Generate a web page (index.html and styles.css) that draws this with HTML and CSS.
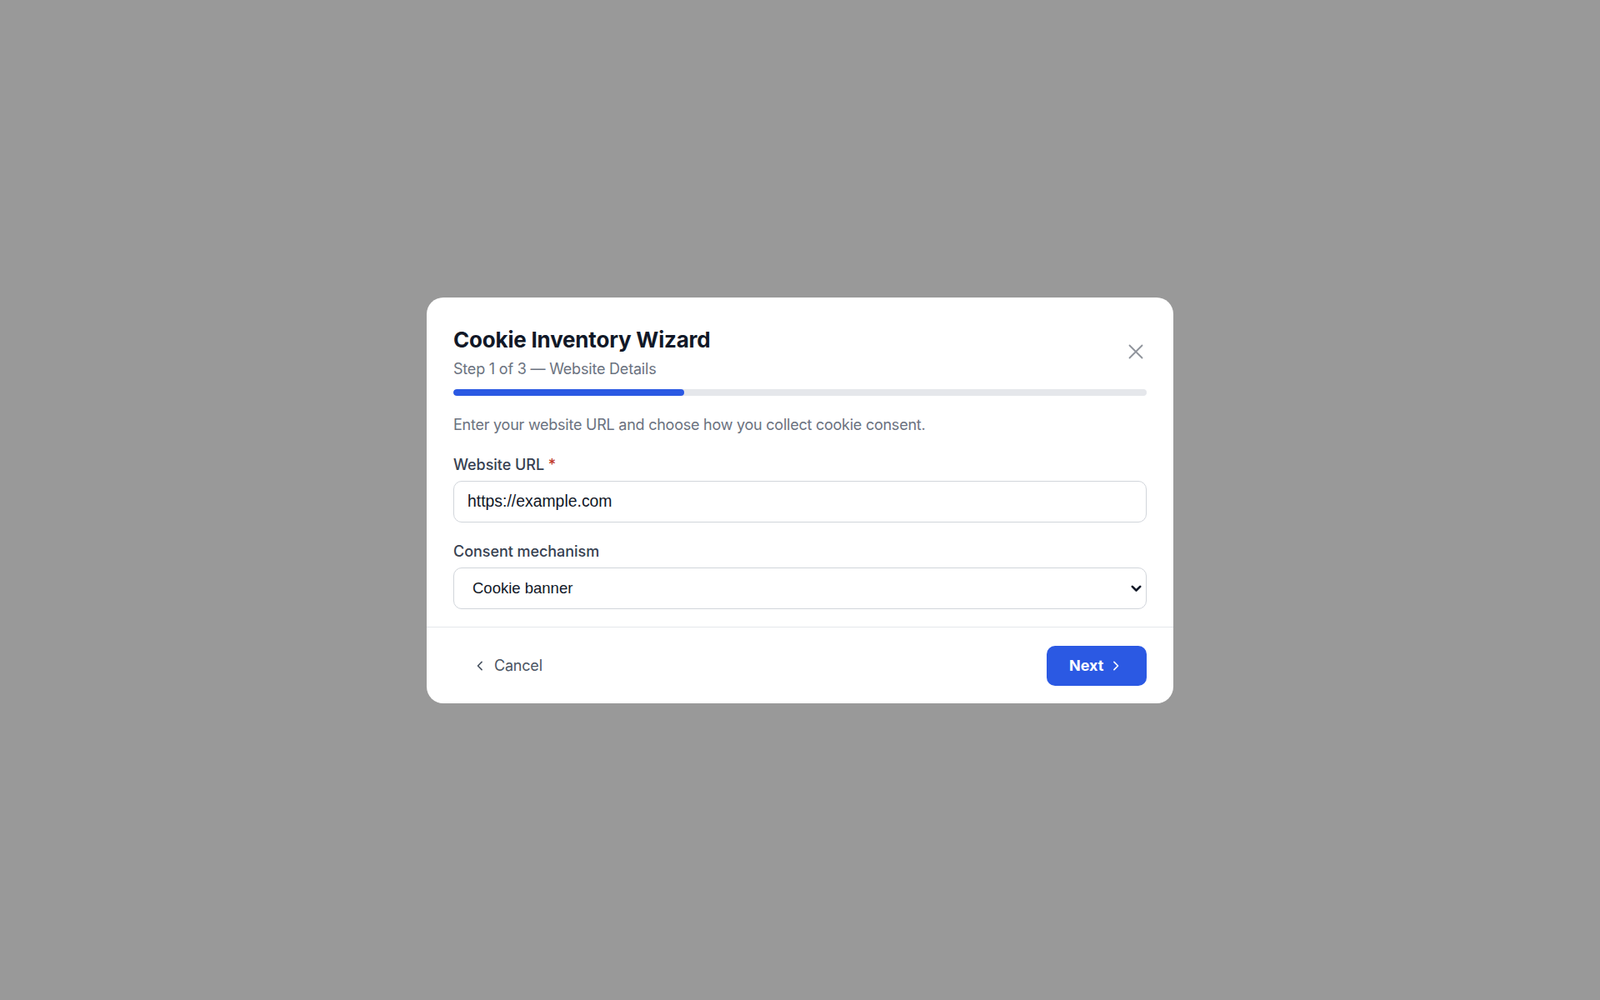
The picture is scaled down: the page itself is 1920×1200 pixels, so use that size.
FILE: index.html
```html
<!DOCTYPE html>
<html lang="en">
<head>
<meta charset="utf-8">
<title>Cookie Inventory Wizard</title>
<link rel="stylesheet" href="styles.css">
</head>
<body>
<div class="overlay">
  <div class="modal" role="dialog" aria-labelledby="wizard-title">
    <div class="modal-body">
      <div class="header">
        <div class="header-text">
          <h2 id="wizard-title" class="title">Cookie Inventory Wizard</h2>
          <p class="subtitle">Step 1 of 3 — Website Details</p>
        </div>
        <button class="close" aria-label="Close">
          <svg width="20" height="20" viewBox="0 0 20 20" fill="none" stroke="currentColor" stroke-width="1.8" stroke-linecap="round"><path d="M2.5 2.5l15 15M17.5 2.5l-15 15"/></svg>
        </button>
      </div>
      <div class="progress"><div class="progress-fill" style="width:33.33%"></div></div>
      <p class="desc">Enter your website URL and choose how you collect cookie consent.</p>
      <div class="field">
        <label class="label" for="url">Website URL <span class="req">*</span></label>
        <input id="url" class="input" type="text" value="https://example.com">
      </div>
      <div class="field">
        <label class="label" for="consent">Consent mechanism</label>
        <div class="select-wrap">
          <select id="consent" class="select">
            <option>Cookie banner</option>
            <option>Consent management platform</option>
            <option>None</option>
          </select>
          <svg class="select-arrow" width="13" height="9" viewBox="0 0 13 9" fill="none" stroke="currentColor" stroke-width="2.6" stroke-linecap="round" stroke-linejoin="round"><path d="M1.8 1.8L6.5 6.5l4.7-4.7"/></svg>
        </div>
      </div>
    </div>
    <div class="footer">
      <button class="btn-ghost">
        <svg width="20" height="20" viewBox="0 0 24 24" fill="none" stroke="currentColor" stroke-width="2" stroke-linecap="round" stroke-linejoin="round"><path d="M14.5 17.5L9 12l5.5-5.5"/></svg>
        <span>Cancel</span>
      </button>
      <button class="btn-primary">
        <span>Next</span>
        <svg width="20" height="20" viewBox="0 0 24 24" fill="none" stroke="currentColor" stroke-width="2" stroke-linecap="round" stroke-linejoin="round"><path d="M9.5 6.5L15 12l-5.5 5.5"/></svg>
      </button>
    </div>
  </div>
</div>
</body>
</html>
```
FILE: styles.css
```css
* { box-sizing: border-box; }
html, body { margin: 0; padding: 0; height: 100%; }
body {
  background: #999999;
  font-family: Inter, "Noto Sans", "Liberation Sans", sans-serif;
  color: #111827;
}
.overlay {
  min-height: 100vh;
  display: flex;
  align-items: center;
  justify-content: center;
}
.modal {
  width: 896px;
  background: #ffffff;
  border-radius: 20px;
  overflow: hidden;
}
.modal-body {
  padding: 32px 32px 21px;
}
.header {
  display: flex;
  align-items: center;
  justify-content: space-between;
}
.title {
  margin: 0;
  font-size: 26px;
  line-height: 38px;
  font-weight: 700;
  color: #111827;
  letter-spacing: -0.2px;
}
.subtitle {
  margin: 3px 0 0;
  font-size: 18px;
  line-height: 26px;
  color: #6b7280;
  letter-spacing: -0.2px;
}
.close {
  border: 0;
  background: none;
  padding: 6px;
  margin-right: -3px;
  color: #8f939b;
  display: flex;
  cursor: pointer;
}
.progress {
  margin-top: 11px;
  height: 8px;
  border-radius: 4px;
  background: #e5e7eb;
  overflow: hidden;
}
.progress-fill {
  height: 100%;
  background: #2b59e3;
  border-radius: 4px;
}
.desc {
  margin: 22px 0 0;
  font-size: 18px;
  line-height: 26px;
  color: #6b7280;
  letter-spacing: -0.24px;
}
.field {
  margin-top: 22px;
  display: flex;
  flex-direction: column;
  gap: 6px;
}
.label {
  font-size: 18px;
  line-height: 26px;
  font-weight: 500;
  color: #374151;
  letter-spacing: -0.05px;
}
.req { color: #c0392b; }
.input, .select {
  height: 50px;
  width: 100%;
  border: 1px solid #d1d5db;
  border-radius: 10px;
  background: #ffffff;
  color: #111827;
  font-family: "Liberation Sans", Arial, sans-serif;
  outline: none;
  margin: 0;
}
.input {
  padding: 0 16px;
  font-size: 19.4px;
}
.select-wrap {
  position: relative;
}
.select {
  appearance: none;
  -webkit-appearance: none;
  padding: 0 36px 0 22px;
  font-size: 18.5px;
  display: block;
}
.select-arrow {
  position: absolute;
  right: 6px;
  top: 21px;
  color: #111827;
  pointer-events: none;
}
.footer {
  border-top: 1px solid #e5e7eb;
  padding: 22px 32px 21px;
  display: flex;
  align-items: center;
  justify-content: space-between;
}
.btn-ghost {
  display: flex;
  align-items: center;
  gap: 7px;
  height: 48px;
  padding: 0 24px 0 22px;
  border: 0;
  background: none;
  color: #4b5563;
  font-family: inherit;
  font-size: 18px;
  letter-spacing: -0.2px;
  cursor: pointer;
}
.btn-primary {
  display: flex;
  align-items: center;
  gap: 5px;
  height: 48px;
  width: 120px;
  padding: 0 24px 0 27px;
  border: 0;
  border-radius: 10px;
  background: #2b59e3;
  color: #ffffff;
  font-family: inherit;
  font-size: 18px;
  font-weight: 700;
  cursor: pointer;
}
```
